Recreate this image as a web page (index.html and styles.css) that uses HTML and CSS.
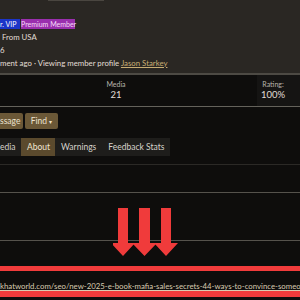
FILE: index.html
```html
<!doctype html>
<html lang="en">
 <head>
  <meta charset="UTF-8">
  <meta name="viewport" content="width=device-width, initial-scale=1.0">
  <title>Member profile</title>
  <link rel="stylesheet" href="styles.css">
 </head>
 <body>
  <div class="profile">
   <div class="top-tab"></div>
   <div class="badges">
    <span class="badge vip">r. VIP</span>
    <span class="badge premium">Premium Member</span>
   </div>
   <div class="meta from">From USA</div>
   <div class="meta">6</div>
   <div class="meta">ment ago · Viewing member profile <a href="#" class="member">Jason Starkey</a></div>
  </div>

  <div class="stats">
   <div class="stat media">
    <div class="stat-label">Media</div>
    <div class="stat-value">21</div>
   </div>
   <div class="stat rating">
    <div class="stat-label">Rating:</div>
    <div class="stat-value">100%</div>
   </div>
  </div>

  <div class="actions">
   <button class="btn msg">ssage</button>
   <button class="btn find">Find <span class="caret">▾</span></button>
  </div>

  <div class="tabs">
   <span class="tab first">edia</span>
   <span class="tab active">About</span>
   <span class="tab">Warnings</span>
   <span class="tab">Feedback Stats</span>
  </div>

  <div class="tab-rule"></div>
  <div class="panel-rule"></div>

  <div class="notice">
   <svg class="arrows" width="72" height="50" viewBox="0 0 72 50">
    <path d="M5 0h10v35h7L10 48-2 35h7z" fill="#f03b3b"/>
    <path d="M26 0h11v35h7L31.5 48 19 35h7z" fill="#f03b3b"/>
    <path d="M48 0h10v35h7L53 48 41 35h7z" fill="#f03b3b"/>
   </svg>
  </div>

  <div class="linkbox">
   <a href="#" class="thread-link">khatworld.com/seo/new-2025-e-book-mafia-sales-secrets-44-ways-to-convince-someo</a>
  </div>
 </body>
</html>
```

FILE: styles.css
```css
* {
  margin: 0;
  padding: 0;
  box-sizing: border-box;
}

body {
  width: 300px;
  height: 300px;
  overflow: hidden;
  background: #0e0d0c;
  color: #e2ded6;
  font-family: Lato, "Open Sans", sans-serif;
}

.profile {
  background: #2a2723;
  height: 75px;
  border-bottom: 2px solid #4d4a44;
}

.top-tab {
  margin-left: 48px;
  width: 56px;
  height: 1px;
  background: #4a4640;
}

.badges {
  display: flex;
  gap: 1px;
  margin-top: 18px;
  height: 10px;
}

.badge {
  font-size: 7px;
  line-height: 10px;
  color: #fff;
  white-space: nowrap;
}

.vip {
  background: #1c35c8;
  width: 20px;
}

.premium {
  background: #9a2fae;
  width: 54px;
  text-align: center;
  color: #f6dcf8;
}

.meta {
  font-size: 7.8px;
  line-height: 13px;
  white-space: nowrap;
}

.from {
  margin-top: 1.5px;
  padding-left: 2px;
}

.member {
  color: #c8ad73;
}

.stats {
  display: flex;
  height: 32px;
  border-bottom: 1px solid #64625b;
}

.stat {
  text-align: center;
  padding-top: 5px;
}

.media {
  margin-left: 96px;
  width: 40px;
}

.rating {
  margin-left: auto;
  width: 43px;
  padding-right: 11px;
  background: #151413;
}

.stat-label {
  font-size: 7px;
  line-height: 9px;
  color: #b9b5ad;
}

.stat-value {
  font-size: 9.5px;
  line-height: 12px;
  color: #e0ddd6;
}

.actions {
  display: flex;
  gap: 2px;
  margin-top: 6px;
}

.btn {
  font-family: inherit;
  font-size: 8.5px;
  line-height: 16px;
  height: 16px;
  border: none;
  border-radius: 2px;
  background: #6b5837;
  color: #ece2cf;
}

.msg {
  width: 23px;
  text-align: left;
  border-radius: 0 2px 2px 0;
}

.find {
  width: 33px;
}

.caret {
  font-size: 6px;
}

.tabs {
  display: flex;
  margin-top: 9px;
  height: 18px;
}

.tab {
  font-size: 8.5px;
  line-height: 18px;
  padding: 0 6px;
  background: #1e1d1b;
  color: #d6d2ca;
  white-space: nowrap;
}

.tab.first {
  width: 21px;
  padding-left: 0;
}

.tab.active {
  width: 34px;
  text-align: center;
  background: #5b4a2d;
  color: #f0e6d2;
}

.tab-rule {
  margin-top: 8px;
  height: 1px;
  background: #2b2926;
}

.panel-rule {
  margin-top: 27px;
  height: 1px;
  background: #55524c;
}

.notice {
  position: relative;
  height: 48px;
  border-bottom: 1px solid #55524c;
}

.arrows {
  position: absolute;
  left: 113px;
  top: 15px;
}

.linkbox {
  margin-top: 25px;
  border-top: 5px solid #f03b3b;
  border-bottom: 6px solid #f03b3b;
  height: 31px;
  padding-top: 2px;
  white-space: nowrap;
  overflow: hidden;
}

.thread-link {
  font-size: 7.8px;
  line-height: 13px;
  color: #d8cbb0;
}
```
